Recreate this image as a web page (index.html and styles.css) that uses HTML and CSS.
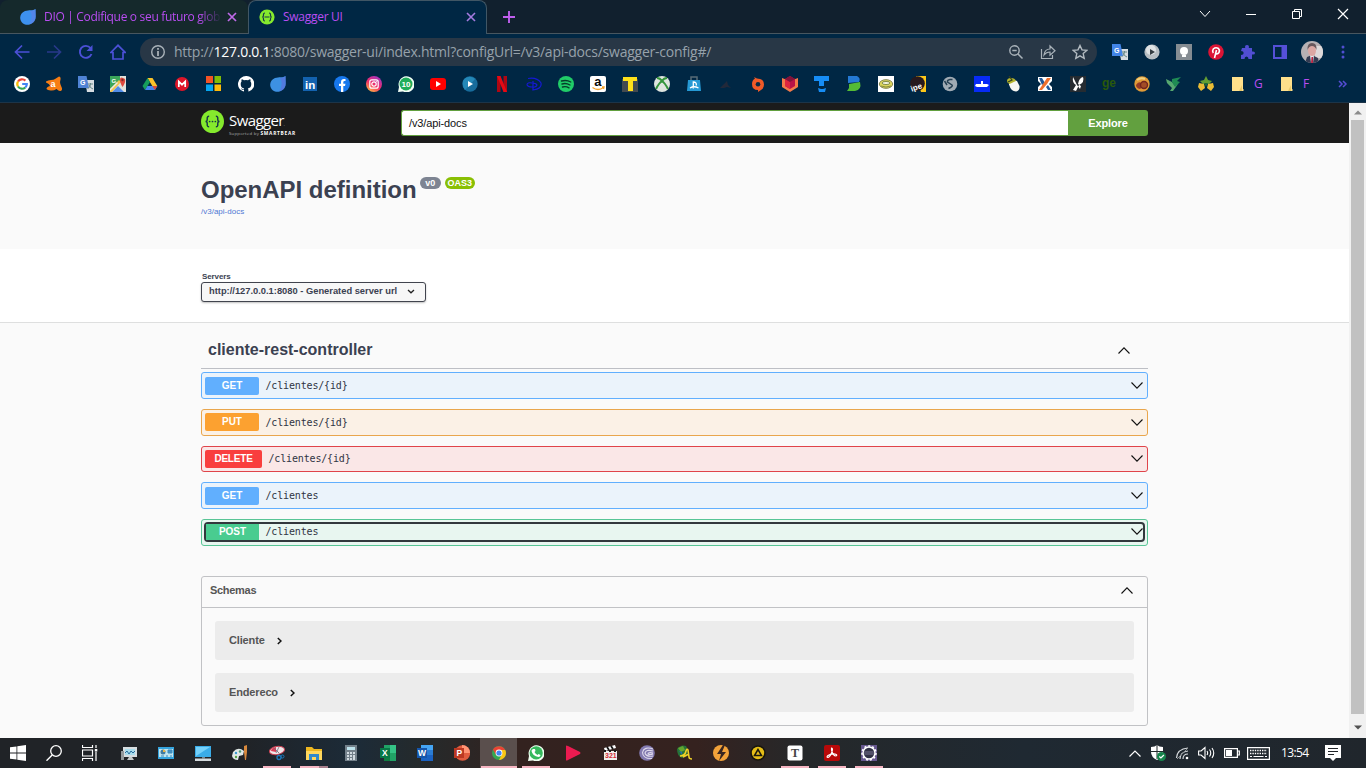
FILE: index.html
```html
<!DOCTYPE html>
<html lang="pt-BR">
<head>
<meta charset="utf-8">
<title>Swagger UI</title>
<link rel="stylesheet" href="styles.css">
</head>
<body>
<header class="tabs">
  <div class="tab tab-idle">
    <svg class="i16" viewBox="0 0 16 16"><path d="M15.500 0C13 2 9 .8 5 2-.5 4-1.500 11 3 14.500 8 18 16 14 15.700 7Z" fill="#3d91ef"/><path d="M15.500 0Q14 2 10 2q4 6-1 13.300Q16 14 15.700 7Z" fill="#5d82e8" opacity=".7"/></svg>
    <span class="tab-name fade">DIO | Codifique o seu futuro glob</span>
    <svg class="i10 close1" viewBox="0 0 10 10"><path d="M1 1l8 8M9 1l-8 8" stroke="#c06ae8" stroke-width="1.700"/></svg>
  </div>
  <div class="tab tab-active">
    <svg class="i16" viewBox="0 0 16 16"><circle cx="8" cy="8" r="7.600" fill="#85ea2d"/><path d="M6 4Q4.300 4 4.500 6q0 2-1.200 2 1.200 0 1.200 2-.2 2 1.500 2M10 4q1.700 0 1.500 2 0 2 1.200 2-1.200 0-1.200 2 .2 2-1.500 2M5.500 8h5" fill="none" stroke="#173647" stroke-width="1.200"/></svg>
    <span class="tab-name">Swagger UI</span>
    <svg class="i10" viewBox="0 0 10 10"><path d="M1 1l8 8M9 1l-8 8" stroke="#a67be0" stroke-width="1.600"/></svg>
  </div>
  <div class="plus"><svg width="12" height="12" viewBox="0 0 12 12"><path d="M6 0v12M0 6h12" stroke="#c05fee" stroke-width="1.900"/></svg></div>
  <div class="win-controls">
    <svg width="12" height="12" viewBox="0 0 12 12"><path d="M1 3l5 5.500L11 3" fill="none" stroke="#fff"/></svg>
    <svg width="12" height="12" viewBox="0 0 12 12"><path d="M1 6.500h10" stroke="#fff"/></svg>
    <svg width="12" height="12" viewBox="0 0 12 12"><path d="M1.500 3.500h7v7h-7zM3.500 3V1.500h7v7H9" fill="none" stroke="#fff"/></svg>
    <svg width="12" height="12" viewBox="0 0 12 12"><path d="M1 1l10 10M11 1L1 11" stroke="#fff" stroke-width="1.200"/></svg>
  </div>
</header>

<nav class="toolbar">
  <div class="nav-icons">
    <svg class="i16" viewBox="0 0 16 16"><path d="M15.500 8H2M8 1.500L1.500 8 8 14.500" fill="none" stroke="#4b50d6" stroke-width="1.700"/></svg>
    <svg class="i16" viewBox="0 0 16 16"><path d="M1 8h13M8 1.500L14.500 8 8 14.500" fill="none" stroke="#28398a" stroke-width="1.700"/></svg>
    <svg class="i16" viewBox="0 0 16 16"><path d="M13.500 10A6 6 0 1 1 12.500 4" fill="none" stroke="#4b50d6" stroke-width="1.900"/><path d="M14.500 1v6h-6z" fill="#4b50d6"/></svg>
    <svg class="i16" viewBox="0 0 16 16"><path d="M.8 8.500L8 1.300l7.200 7.200H13V15H3V8.500z" fill="none" stroke="#4b50d6" stroke-width="1.700"/></svg>
  </div>
  <div class="address">
    <svg class="i16" viewBox="0 0 16 16"><circle cx="8" cy="8" r="6.300" fill="none" stroke="#a9b2b9" stroke-width="1.400"/><path d="M8 4v1.700M8 7v5" stroke="#b9c0c5" stroke-width="1.600"/></svg>
    <span class="url">http://<b>127.0.0.1</b>:8080/swagger-ui/index.html?configUrl=/v3/api-docs/swagger-config#/</span>
    <div class="addr-icons">
      <svg class="i16" viewBox="0 0 16 16"><circle cx="6.500" cy="6.500" r="4.700" fill="none" stroke="#a9b2b9" stroke-width="1.400"/><path d="M10 10l4.500 4.500M4.300 6.500h4.400" stroke="#a9b2b9" stroke-width="1.500"/></svg>
      <svg class="i16" viewBox="0 0 16 16"><path d="M1.500 5v9.500h11V11M4 11c.5-4 3-6 6-6V2l5 4.700-5 4.500V8C7.500 8 5.500 9 4 11z" fill="none" stroke="#a9b2b9" stroke-width="1.200"/></svg>
      <svg class="i16" viewBox="0 0 16 16"><path d="M8 1.500l2 4.400 4.800.5-3.600 3.200 1 4.700L8 11.900l-4.200 2.400 1-4.700L1.200 6.400 6 5.900z" fill="none" stroke="#b3bbc1" stroke-width="1.400"/></svg>
    </div>
  </div>
  <div class="ext-icons">
    <svg class="i16" viewBox="0 0 16 16"><path d="M7 5h9v11H9z" fill="#d6dce1"/><path d="M0 0h8.500L11 12H0z" fill="#4285e8"/><text class="tiny" x="2" y="9" font-size="7" fill="#fff">G</text><path d="M10 8h5M12.500 7v1q0 3-3 5M11 9q1 3 4 4" stroke="#688" fill="none"/></svg>
    <svg class="i16" viewBox="0 0 16 16"><circle cx="8" cy="8" r="7.600" fill="#b7bec3"/><circle cx="7" cy="6" r="5" fill="#dfe3e5"/><path d="M6 5l5 3-5 3z" fill="#343c42"/></svg>
    <svg class="i16" viewBox="0 0 16 16"><path d="M0 0h16v16H0z" fill="#858c92"/><circle cx="8" cy="7" r="4" fill="#fff"/><path d="M6 11h4v2H6z" fill="#fff"/></svg>
    <svg class="i16" viewBox="0 0 16 16"><circle cx="8" cy="8" r="7.800" fill="#dc1435"/><path d="M5.300 9Q4 7 5.300 5 7.500 3 10 4.200 12.200 6 11 8.500 9.500 10.700 7.600 9.500M8.500 6L6.500 14" fill="none" stroke="#fff" stroke-width="1.600"/></svg>
    <svg class="i16" viewBox="0 0 16 16"><path d="M2 4h3.200Q4.500 1 7 1t1.800 3H12v3.500q3-.5 3 1.500t-3 1.500V15H8.500q0-2.500-2-2.500t-2 2.500H1v-4q2.700 0 2.700-2T1 7z" fill="#514ed3"/></svg>
    <svg class="i16" viewBox="0 0 16 16"><path d="M2 2h12v12H2z" fill="none" stroke="#5550d8" stroke-width="2"/><path d="M9.500 2H14v12H9.500z" fill="#5550d8"/></svg>
    <svg class="avatar" viewBox="0 0 22 22"><defs><clipPath id="av"><circle cx="11" cy="11" r="11"/></clipPath></defs><g clip-path="url(#av)"><path d="M0 0h22v22H0z" fill="#b7b1b4"/><path d="M13 5h9v12h-8z" fill="#ddd9da"/><path d="M4 22l2-6 5-2 6 3 1 5" fill="#343c53"/><path d="M9 14h4l-1 8h-2z" fill="#e8e9ed"/><path d="M10.500 16h1.500v6h-2z" fill="#b42342"/><ellipse cx="11" cy="9.500" rx="4" ry="5.500" fill="#dba7a3"/><path d="M6.500 9Q6 2 11 2t4.500 7Q14 5 11 5T6.500 9" fill="#68575b"/></g></svg>
    <svg class="menu" viewBox="0 0 4 16"><circle cx="2" cy="3" r="1.500" fill="#504fd2"/><circle cx="2" cy="8" r="1.500" fill="#504fd2"/><circle cx="2" cy="13" r="1.500" fill="#504fd2"/></svg>
  </div>
</nav>

<nav class="bookmarks">
  <svg viewBox="0 0 16 16"><circle cx="8" cy="8" r="8" fill="#fff"/><g fill="none" stroke-width="2.200"><path d="M11.400 4.600A4.800 4.800 0 0 0 4 5.500" stroke="#ea4335"/><path d="M4 5.500a4.800 4.800 0 0 0 0 5" stroke="#fbbc05"/><path d="M4 10.500a4.800 4.800 0 0 0 7.300 1" stroke="#34a853"/><path d="M11.300 11.500A4.700 4.700 0 0 0 12.800 8H8.200" stroke="#4285f4"/></g></svg>
  <svg viewBox="0 0 16 16"><path d="M13 .5q2 0 1.500 3L14 6q0 2 1.500 5t-1 4q-1.500.5-4-2-3 2-6 1.500T.5 13q0-2 3.500-3-.5-2-3-3T0 5.500Q2 4 5 4q3 0 4-1z" fill="#f77d13"/><text class="tiny" x="4.500" y="11" font-size="9" fill="#fff">a</text></svg>
  <svg viewBox="0 0 16 16"><path d="M7 4h9v12H9z" fill="#d6dce1"/><path d="M0 0h8.500L11 12H0z" fill="#4f83d5"/><text class="tiny" x="2" y="9" font-size="7" fill="#fff">G</text><path d="M10 8h5M12.500 7v1q0 3-3 5M11 9q1 3 4 4" stroke="#688" fill="none"/></svg>
  <svg viewBox="0 0 16 16"><path d="M0 0h16v16H0z" fill="#e1e2dc"/><path d="M0 0h10v5L2 13H0z" fill="#3ca65a"/><path d="M2 16l6-6 6 6z" fill="#528de9"/><path d="M0 13L9 4l2 2L2 16H0z" fill="#f2c34e"/><path d="M0 13l7-7 1 1-8 8z" fill="#e9ece7"/><text class="tiny" x="1.500" y="6.500" font-size="6" fill="#fff">G</text><path d="M12.500 11Q9.500 6 10 3t5 0q1 3-2.500 8" fill="#df493e"/><circle cx="12.500" cy="4" r="1.200" fill="#812b28"/></svg>
  <svg viewBox="0 0 16 16"><path d="M5.500 2h5l4.800 8h-5z" fill="#fbc229"/><path d="M5.500 2L8 6l-5 8-2.500-4z" fill="#169d5b"/><path d="M3 14l2.400-4h9.900L13 14z" fill="#4385ee"/><path d="M10.300 10h5L13 14z" fill="#dd4a37"/></svg>
  <svg viewBox="0 0 16 16"><circle cx="8" cy="8" r="7" fill="#dd1529"/><path d="M4.800 11V5.500L8 8.700l3.200-3.200V11" fill="none" stroke="#fff" stroke-width="1.700"/></svg>
  <svg viewBox="0 0 16 16"><path d="M0 0h7v7H0z" fill="#f35325"/><path d="M8.500 0H15v7H8.500z" fill="#81bc06"/><path d="M0 8.500h7V15H0z" fill="#05a6f0"/><path d="M8.500 8.500H15V15H8.500z" fill="#ffba08"/></svg>
  <svg viewBox="0 0 16 16"><path d="M8 0a8 8 0 0 0-2.500 15.600c.4 0 .5-.2.500-.5v-1.400c-2.200.4-2.800-1-3-1.500.8 0 1.200 1 2 1 .5 0 .9-.2 1.200-.8C4 12 2.700 11 2.700 8q0-1.400.9-2.400-.4-1 .1-2.300 1 0 2.300.9 2-.5 4 0 1.300-.9 2.300-.9.500 1.300.1 2.300.9 1 .9 2.400c0 3-1.500 4-3.500 4.400.4.400.6 1 .6 1.700v1c0 .4.100.5.400.5A8 8 0 0 0 8 0" fill="#fff"/></svg>
  <svg viewBox="0 0 16 16"><path d="M15.500 0C13 2 9 .8 5 2-.5 4-1.500 11 3 14.500 8 18 16 14 15.700 7Z" fill="#3d91e3"/><path d="M15.500 0Q14 2 10 2q4 6-1 13.300Q16 14 15.700 7Z" fill="#5c70dc" opacity=".7"/></svg>
  <svg viewBox="0 0 16 16"><path d="M1 1h14v14H1z" fill="#1362af"/><text class="tiny" x="3" y="12.500" font-size="11.500" fill="#fff">in</text></svg>
  <svg viewBox="0 0 16 16"><circle cx="8" cy="8" r="8" fill="#1778ed"/><path d="M7 16v-6H5V7.700h2V6q0-3 3-3h1.500v2h-1Q9.300 5 9.300 6.300v1.400h2.200L11 10H9.300v6z" fill="#fff"/></svg>
  <svg viewBox="0 0 16 16"><defs><linearGradient id="ig" x1=".2" y1="1" x2=".8" y2="0"><stop stop-color="#ffc142"/><stop offset=".45" stop-color="#f42e66"/><stop offset="1" stop-color="#9d35c8"/></linearGradient></defs><circle cx="8" cy="8" r="8" fill="url(#ig)"/><rect x="3.800" y="3.800" width="8.400" height="8.400" rx="2" fill="none" stroke="#fff" stroke-width="1.200"/><circle cx="8" cy="8" r="2.200" fill="none" stroke="#fff" stroke-width="1.200"/><circle cx="10.700" cy="5.300" r=".6" fill="#fff"/></svg>
  <svg viewBox="0 0 16 16"><path d="M0 16L1 11A8 8 0 1 1 5 15.500z" fill="#f2fff6"/><circle cx="8" cy="8" r="6.500" fill="#20ad59"/><text class="tiny" x="3.500" y="11" font-size="8" fill="#fff">10</text></svg>
  <svg viewBox="0 0 16 16"><rect y="2" width="16" height="12" rx="3" fill="#f00"/><path d="M6 5l5 3-5 3z" fill="#fff"/></svg>
  <svg viewBox="0 0 16 16"><circle cx="8" cy="8" r="7.700" fill="#176c9c"/><path d="M1 5a7.500 7.500 0 0 1 12-2q-4 5-10 11Q0 10 1 5" fill="#2488b8"/><path d="M6 5l5 3-5 3z" fill="#fff"/></svg>
  <svg viewBox="0 0 16 16"><path d="M3 0h3.500v16H3zM9.500 0H13v16H9.500z" fill="#ae0713"/><path d="M3 0h3.500L13 16H9.500z" fill="#e50914"/></svg>
  <svg viewBox="0 0 16 16"><path d="M2 2.500Q11 1 15 7q1 6-8 7V5M1 9q0-3 5-2 4 0 5 2-1 3-5 2-4 0-5-2" fill="none" stroke="#1519d4" stroke-width="1.200"/></svg>
  <svg viewBox="0 0 16 16"><circle cx="8" cy="8" r="8" fill="#20cc68"/><path d="M3.500 5q5-1.500 9.300 1M4 8q4-1.200 8 1M4.500 11q3.500-1 6.500.8" fill="none" stroke="#063c2a" stroke-width="1.400" stroke-linecap="round"/></svg>
  <svg viewBox="0 0 16 16"><rect width="16" height="16" rx="2" fill="#fff"/><text class="tiny" x="4.300" y="10" font-size="13" fill="#080808">a</text><path d="M2.500 11.500q5.500 4 11 0m-1.500-.5h2l-.5 2" fill="none" stroke="#f5a229" stroke-width="1.300"/></svg>
  <svg viewBox="0 0 16 16"><path d="M0 3h16v13H0z" fill="#434a50"/><path d="M1 1h14v4h-4v10H6V5H1z" fill="#ffe11a"/></svg>
  <svg viewBox="0 0 16 16"><circle cx="8" cy="8" r="8" fill="#dfe5df"/><path d="M3 2q3 0 5 3 2-3 5-3M2 13Q5 7 8 5q3 2 6 8" fill="none" stroke="#35953c" stroke-width="2"/></svg>
  <svg viewBox="0 0 16 16"><path d="M5 4V1h6v3" fill="none" stroke="#586c77" stroke-width="1.500"/><path d="M2 4h12l1 11H1z" fill="#2599d4"/><path d="M7.300 12.500V6q3.500 0 3 3.500M4 12q4-2.500 8.500 0" stroke="#fff" fill="none" stroke-width="1.300"/></svg>
  <svg viewBox="0 0 16 16"><path d="M2 12l4-4 3-3 1 4 3 3-4-1-3 1z" fill="#22293a"/></svg>
  <svg viewBox="0 0 16 16"><path d="M4 1l3 1.500q7 0 7 6 0 4-3 5.500L8 16v-2q-6 0-6-6 0-4 3-5.500z" fill="#f05a28"/><circle cx="8" cy="8.300" r="2.300" fill="#082b46"/></svg>
  <svg viewBox="0 0 16 16"><path d="M0 2l8 3 8-3v9l-8 5-8-5z" fill="#f47a49"/><path d="M3 3l5-3 5 3v7l-5 3-5-3z" fill="#b91247"/><path d="M3 3l5 3v7l-5-3z" fill="#df263f"/><path d="M3 3l5-3 5 3-5 3z" fill="#831339"/></svg>
  <svg viewBox="0 0 16 16"><path d="M0 0h15v5H10v5H5V5H0zM4 12l3 1h2l3-1-1 4H5z" fill="#168df5"/></svg>
  <svg viewBox="0 0 16 16"><path d="M2 0h9q4 2 2 6L2 7z" fill="#2479d4"/><path d="M3 8l11-2q2 8-5 9H1l2-3z" fill="#54bb35"/></svg>
  <svg viewBox="0 0 16 16"><path d="M0 0h16v16H0z" fill="#fff"/><ellipse cx="8" cy="8" rx="6.700" ry="4.300" fill="#ddd65d" stroke="#858552"/><ellipse cx="8" cy="7" rx="4" ry="1.500" fill="#f8f8e7" stroke="#66712c" stroke-width=".8"/><path d="M3 10q5 2 10 0" fill="none" stroke="#66712c" stroke-width=".7"/></svg>
  <svg viewBox="0 0 16 16"><path d="M6 0h10v16h-5z" fill="#fdc719"/><circle cx="7.500" cy="7.500" r="7.300" fill="#27191d"/><text class="tiny" x="0" y="14" font-size="8" transform="rotate(-20 6 10)" fill="#fff">ipe</text></svg>
  <svg viewBox="0 0 16 16"><circle cx="8" cy="8" r="7.300" fill="#a0abb4"/><path d="M10.500 3.500H8Q5 4 5.500 6L10 9q1 1-1.500 2.500l-2 1M2.500 5l2.500 4" stroke="#253f51" stroke-width="1.500" fill="none"/></svg>
  <svg viewBox="0 0 16 16"><path d="M0 0h16v16H0z" fill="#072bf7"/><path d="M2 8h5V5h2v3h4l2 1-2 2H3L1 10z" fill="#fff"/></svg>
  <svg viewBox="0 0 16 16"><path d="M3 6q4-3 8-1l2.500 5q.5 5-3.500 5.500-5 0-7-7z" fill="#f7f7f2"/><path d="M1 5q0-3 4-3 4 0 5 3L3.500 8Q1 7 1 5" fill="#b5b52e"/><path d="M3 0l3 4-4 2" stroke="#34411d" stroke-width="1.200" fill="none"/></svg>
  <svg viewBox="0 0 16 16"><path d="M0 1h14v4l-3 3 3 3v4H0v-4l3-3-3-3z" fill="#fff"/><path d="M1 2h3l3 5-3 2zm9 7l3 5h-3L8 11z" fill="#235999"/><path d="M9 2h4l-4 6-5 6H1z" fill="#ef702c"/></svg>
  <svg viewBox="0 0 16 16"><path d="M0 0h16v16H0z" fill="#252b31"/><path d="M7 9L3 1q-1 6 3 8l-3 5 3 1 3-6q6-3 4-8-4 1-5 7l3 2-1 3" fill="#fff"/></svg>
  <svg viewBox="0 0 16 16"><text class="tiny" x="0" y="11" font-size="12" fill="#29590b">ge</text></svg>
  <svg viewBox="0 0 16 16"><circle cx="8" cy="8" r="7.700" fill="#e09a37"/><path d="M3 4q4-3 8-1" stroke="#f0d180" stroke-width="2" fill="none"/><path d="M2 9q3-5 6-1 1 3-2 5-4-1-4-4" fill="#963a27"/><circle cx="10" cy="9" r="3.500" fill="#a24c26" stroke="#74251d" stroke-width="1.400"/></svg>
  <svg viewBox="0 0 16 16"><path d="M0 3l6 3 3 4 3-2-5 7H4l2-3-5-5z" fill="#57a870"/><path d="M6 3l9-2-4 4 3 1-5 5-3-5z" fill="#1f8b54"/></svg>
  <svg viewBox="0 0 16 16"><path d="M8 0l2 4 4 1-3 3H5L2 5l4-1z" fill="#639e32"/><path d="M1 7l5 1 1 4-4 3-3-4zM15 7l-5 1-1 4 4 3 3-4z" fill="#eabd35"/><path d="M6 7h4L8 11z" fill="#1b6838"/></svg>
  <div class="folder folder-g"><svg viewBox="0 0 16 16"><path d="M2 1h11v12l1 1-1 1H2z" fill="#ffe08b"/><path d="M12 9v6H9z" fill="#e9c767"/></svg><span>G</span></div>
  <div class="folder folder-f"><svg viewBox="0 0 16 16"><path d="M2 1h11v12l1 1-1 1H2z" fill="#ffe08b"/><path d="M12 9v6H9z" fill="#e9c767"/></svg><span>F</span></div>
  <svg class="more" viewBox="0 0 10 10"><path d="M1 2l3 3-3 3M5 2l3 3-3 3" fill="none" stroke="#554dd4" stroke-width="1.500"/></svg>
</nav>

<div class="viewport">
<main class="page">
  <div class="topbar"><div class="wrap topbar-row">
    <div class="logo">
      <svg width="23" height="23" viewBox="0 0 24 24"><circle cx="12" cy="12" r="12" fill="#85ea2d"/><path d="M8.500 6.500q-2.300 0-2 2.500.2 3-1.800 3 2 0 1.800 3-.3 2.500 2 2.500M15.500 6.500q2.300 0 2 2.500-.2 3 1.800 3-2 0-1.800 3 .3 2.500-2 2.500" fill="none" stroke="#173647" stroke-width="1.500"/><g fill="#173647"><circle cx="9" cy="12" r=".9"/><circle cx="12" cy="12" r=".9"/><circle cx="15" cy="12" r=".9"/></g></svg>
      <div class="logo-text"><span class="logo-name">Swagger<i>.</i></span><span class="logo-sub">Supported by <b>SMARTBEAR</b></span></div>
    </div>
    <div class="search"><span class="search-input">/v3/api-docs</span><span class="explore">Explore</span></div>
  </div></div>

  <section class="info"><div class="wrap">
    <h1>OpenAPI definition<span class="pill pill-v">v0</span><span class="pill pill-oas">OAS3</span></h1>
    <a class="docs">/v3/api-docs</a>
  </div></section>

  <section class="servers"><div class="wrap">
    <div class="servers-label">Servers</div>
    <div class="select"><span>http://127.0.0.1:8080 - Generated server url</span><svg width="8" height="5" viewBox="0 0 8 5"><path d="M1 1l3 2.800L7 1" fill="none" stroke="#222" stroke-width="1.300"/></svg></div>
  </div></section>

  <section class="wrap">
    <div class="tag"><h2>cliente-rest-controller</h2><svg class="chev" viewBox="0 0 12 7"><path d="M.5 6.500L6 .8l5.500 5.700" fill="none" stroke="#111" stroke-width="1.100"/></svg></div>
    <div class="ops">
      <div class="op get"><div class="op-in"><b>GET</b><code>/clientes/{id}</code><svg class="chev" viewBox="0 0 12 7"><path d="M.5.500L6 6.200 11.500.5" fill="none" stroke="#111" stroke-width="1.100"/></svg></div></div>
      <div class="op put"><div class="op-in"><b>PUT</b><code>/clientes/{id}</code><svg class="chev" viewBox="0 0 12 7"><path d="M.5.500L6 6.200 11.500.5" fill="none" stroke="#111" stroke-width="1.100"/></svg></div></div>
      <div class="op delete"><div class="op-in"><b>DELETE</b><code>/clientes/{id}</code><svg class="chev" viewBox="0 0 12 7"><path d="M.5.500L6 6.200 11.500.5" fill="none" stroke="#111" stroke-width="1.100"/></svg></div></div>
      <div class="op get"><div class="op-in"><b>GET</b><code>/clientes</code><svg class="chev" viewBox="0 0 12 7"><path d="M.5.500L6 6.200 11.500.5" fill="none" stroke="#111" stroke-width="1.100"/></svg></div></div>
      <div class="op post focused"><div class="op-in"><b>POST</b><code>/clientes</code><svg class="chev" viewBox="0 0 12 7"><path d="M.5.500L6 6.200 11.500.5" fill="none" stroke="#111" stroke-width="1.100"/></svg></div></div>
    </div>
    <div class="schemas">
      <div class="schemas-head"><h3>Schemas</h3><svg class="chev" viewBox="0 0 12 7"><path d="M.5 6.500L6 .8l5.500 5.700" fill="none" stroke="#111" stroke-width="1.100"/></svg></div>
      <div class="models">
        <div class="model"><span>Cliente</span><svg width="5" height="8" viewBox="0 0 5 8"><path d="M.8 1L4 4 .8 7" fill="none" stroke="#111" stroke-width="1.500"/></svg></div>
        <div class="model"><span>Endereco</span><svg width="5" height="8" viewBox="0 0 5 8"><path d="M.8 1L4 4 .8 7" fill="none" stroke="#111" stroke-width="1.500"/></svg></div>
      </div>
    </div>
  </section>
</main>
<aside class="scrollbar"><svg width="8" height="5" viewBox="0 0 8 5"><path d="M0 4.500L4 .5l4 4z" fill="#8b8b8b"/></svg><div class="thumb"></div><svg width="8" height="5" viewBox="0 0 8 5"><path d="M0 .5l4 4 4-4z" fill="#505050"/></svg></aside>
</div>

<footer class="taskbar">
  <div class="sys"><svg viewBox="0 0 16 16"><path d="M0 2.300l6.500-.9v6.200H0zM7.300 1.300L16 0v7.600H7.300zM0 8.400h6.500v6.200L0 13.700zM7.300 8.400H16V16l-8.700-1.300z" fill="#fff"/></svg></div>
  <div class="sys"><svg viewBox="0 0 16 16"><circle cx="10" cy="6" r="5.300" fill="none" stroke="#fff" stroke-width="1.300"/><path d="M6.200 10L.5 15.700" stroke="#fff" stroke-width="1.400"/></svg></div>
  <div class="sys"><svg viewBox="0 0 16 16"><path d="M.5 0v2.500h10V0M.5 5h10v6H.500zM.5 16v-2.500h10V16M14 0v3m0 4v9" fill="none" stroke="#fff" stroke-width="1.200"/><path d="M12.800 4h2.500v2.500h-2.500z" fill="#fff"/></svg></div>
  <div class="app first"><svg viewBox="0 0 16 16"><path d="M2 2h14v10H2z" fill="#d7dde0"/><path d="M4 4h10v6H4z" fill="#a9dcec"/><path d="M4 8l2-2 2 3 2-3 2 2 2-2" stroke="#276c9d" fill="none"/><path d="M0 6h3v9H0z" fill="#92989b"/><path d="M8 12h3l2 3H6z" fill="#c3c9ca"/></svg></div>
  <div class="app"><svg viewBox="0 0 16 16"><path d="M0 2h16v12H0z" fill="#35a4de"/><path d="M1 4h14v8H1z" fill="#bfe4ef"/><circle cx="5" cy="7" r="2.500" fill="#417ba2"/><path d="M5 7V4.500A2.500 2.500 0 0 1 7.500 7" fill="#e7b445"/><path d="M10 5h4v3h-4zM3 11h3m2 0h2m2 0h2" fill="#468fc0" stroke="#398bbd"/></svg></div>
  <div class="app"><svg viewBox="0 0 16 16"><path d="M0 1h16v11H0z" fill="#3aace8"/><path d="M1 2h14L1 11z" fill="#75d1fa"/><path d="M7 12h3v1.500H7z" fill="#77868e"/><path d="M0 13.500h16V16H0z" fill="#d4dadd"/></svg></div>
  <div class="app"><svg viewBox="0 0 16 16"><path d="M1 7q5-6 11-1l-1 4-4 1-1 4q-5 0-6-4z" fill="#e0e8e6"/><circle cx="4" cy="8" r="1.200" fill="#3b9ad0"/><circle cx="8" cy="6.500" r="1.200" fill="#4c9a70"/><circle cx="4" cy="12" r="1.200" fill="#56a443"/><path d="M12 1l3-1v7h-3zM12 7h3l-1 8h-1z" fill="#d7893d"/></svg></div>
  <div class="app pinned"><svg viewBox="0 0 16 16"><ellipse cx="8" cy="5.500" rx="7.600" ry="4" fill="#f1e6e9" stroke="#ca4355" transform="rotate(-10 8 5.500)"/><path d="M2 6q0-3 5-4v5z" fill="#d83d56"/><path d="M5 3l5 5M10 2L7 8" stroke="#6f6f7b" stroke-width=".8"/><circle cx="10" cy="12.500" r="2" fill="none" stroke="#1c79bd" stroke-width="1.300"/><circle cx="13.500" cy="11.500" r="1.500" fill="none" stroke="#1c79bd"/></svg></div>
  <div class="app pinned split"><svg viewBox="0 0 16 16"><path d="M0 2h6l2 2h8v11H0z" fill="#eeb720"/><path d="M0 6h16v9H0z" fill="#ffd75d"/><path d="M3 15V9h10v6h-3v-3H6v3z" fill="#3189cb"/></svg></div>
  <div class="app"><svg viewBox="0 0 16 16"><path d="M2 0h12v16H2z" fill="#73808a"/><path d="M4 2h8v3H4z" fill="#bde3ed"/><path d="M4 7h2v2H4zm3 0h2v2H7zm3 0h2v2h-2zM4 10h2v2H4zm3 0h2v2H7zm3 0h2v5h-2zM4 13h2v2H4zm3 0h2v2H7z" fill="#d1dae0"/></svg></div>
  <div class="app"><svg viewBox="0 0 16 16"><path d="M4 0h12v16H4z" fill="#21a366"/><path d="M10 0h6v8h-6z" fill="#35c486"/><path d="M4 8h6v8H4z" fill="#107c41"/><path d="M0 3h10v10H0z" fill="#087846"/><text class="tiny" x="2" y="11" font-size="8.500" fill="#fff">X</text></svg></div>
  <div class="app"><svg viewBox="0 0 16 16"><path d="M4 0h12v16H4z" fill="#1b62c2"/><path d="M4 0h12v5H4z" fill="#44a5f4"/><path d="M4 5h12v5H4z" fill="#2b7cd3"/><path d="M0 3h10v10H0z" fill="#1556ab"/><text class="tiny" x="1" y="11" font-size="8.500" fill="#fff">W</text></svg></div>
  <div class="app"><svg viewBox="0 0 16 16"><circle cx="8.500" cy="8" r="7.700" fill="#e15c3e"/><path d="M8 0a8 8 0 0 1 8 8H8z" fill="#ff9474"/><path d="M0 3h10v10H0z" fill="#bc3822"/><text class="tiny" x="2.500" y="11" font-size="8.500" fill="#fff">P</text></svg></div>
  <div class="app pinned current"><svg viewBox="0 0 16 16"><circle cx="8" cy="8" r="7" fill="#35a853"/><path d="M2 4.500A7 7 0 0 1 14.200 5H8L5 10z" fill="#ea4335"/><path d="M8 5h6.300A7 7 0 0 1 8 15l3-6z" fill="#fbc514"/><circle cx="8" cy="8" r="3.400" fill="#fff"/><circle cx="8" cy="8" r="2.600" fill="#4285f4"/></svg></div>
  <div class="app pinned"><svg viewBox="0 0 16 16"><path d="M0 16L1 11A8 8 0 1 1 5 15.500z" fill="#effff1"/><circle cx="8.200" cy="7.900" r="6.600" fill="#35b95c"/><path d="M5 4l2 0 .5 2-1 1q1 2 3 3l1-1 2 1q0 2-2 2-6-1-7-6 0-1 1.500-2" fill="#fff"/></svg></div>
  <div class="app"><svg viewBox="0 0 16 16"><path d="M1 1q0-1 2 0l12 6q1 1 0 2L3 15q-2 1-2 0z" fill="#eb1b50"/></svg></div>
  <div class="app"><svg viewBox="0 0 16 16"><path d="M2 6h13v9H2z" fill="#f0f0ed"/><path d="M2 3l11-3 1 3L3 6z" fill="#fff"/><path d="M5 2l2 3M9 1l2 3M2 6l2 0M7 6h2m3 0h2" stroke="#171717" stroke-width="1.800"/><text class="tiny" x="3" y="13" font-size="7" fill="#d32c36">321</text></svg></div>
  <div class="app"><svg viewBox="0 0 16 16"><circle cx="8" cy="8" r="7.800" fill="#8279af"/><path d="M14 4Q5 1 3.500 7.500 4 14 13 13.500M14 6Q7 4 6 8q1 4 8 3M14 8q-5-1-5 1 2 1 5 0" fill="none" stroke="#ded9ec" stroke-width="1.100"/></svg></div>
  <div class="app"><svg viewBox="0 0 16 16"><path d="M1 4q4-5 9-3l2 4-1 6-5 2q-5-2-5-9" fill="#267338"/><path d="M2 3l5-2 2 4-4 2z" fill="#64a72f"/><path d="M3 6l3 1v3z" fill="#246bab"/><path d="M4 11q5 0 6-5 1-3 2-1l1 7q0 2 3 2M7 12l6-3" stroke="#efd127" stroke-width="1.600" fill="none"/></svg></div>
  <div class="app"><svg viewBox="0 0 16 16"><circle cx="8" cy="8" r="8" fill="#f2a23a"/><path d="M10 0L4 9h4l-2 7 7-9H9l3-7z" fill="#382521"/></svg></div>
  <div class="app"><svg viewBox="0 0 16 16"><circle cx="8" cy="8" r="7.700" fill="#17150d"/><circle cx="8" cy="8" r="6.200" fill="#e5bd17"/><path d="M8 4.500l-3.500 6h7z" fill="none" stroke="#1b190d" stroke-width="1.500"/></svg></div>
  <div class="app pinned"><svg viewBox="0 0 16 16"><rect x=".5" y=".5" width="15" height="15" rx="2" fill="#fff"/><text class="serif" x="4" y="12" font-size="12" fill="#444">T</text></svg></div>
  <div class="app pinned"><svg viewBox="0 0 16 16"><rect width="16" height="16" rx="2" fill="#b80909"/><path d="M7.500 3q2 0 0 5-1.500 4-3.500 4.500-2 0 0-2 3-2 7-1.500 3 1 1 2Q9 11 7.500 5z" fill="none" stroke="#fff" stroke-width="1.100"/></svg></div>
  <div class="app pinned"><svg viewBox="0 0 16 16"><path d="M0 0h16v16H0z" fill="#66578e"/><circle cx="8" cy="8" r="6" fill="#303044" stroke="#fff" stroke-width="1.500"/><circle cx="8" cy="8" r="7" fill="none" stroke="#fff" stroke-width="1.500" stroke-dasharray="2 2"/><path d="M3 7h10M3 9h10" stroke="#77728e"/></svg></div>
  <div class="tray">
    <svg width="12" height="7" viewBox="0 0 12 7"><path d="M.5 6.500L6 1l5.500 5.500" fill="none" stroke="#fff" stroke-width="1.200"/></svg>
    <svg width="16" height="16" viewBox="0 0 16 16"><path d="M1 2q4 0 6-2 2 2 6 2v5q0 5-6 8-6-3-6-8z" fill="#fff"/><path d="M7 0v14M1 6.500h12" stroke="#222b2c"/><circle cx="11.500" cy="11.500" r="4.500" fill="#16844c"/><path d="M9.300 11.500l1.600 1.500 3-3" fill="none" stroke="#fff" stroke-width="1.200"/></svg>
    <svg width="14" height="14" viewBox="0 0 14 14"><path d="M1.500 12Q2 3 13 2M5 13q0-7 8-8M8 13q0-5 5-5" fill="none" stroke="#d6dadd" stroke-width="1.200"/><path d="M2 13L13 2" stroke="#8b9094"/><circle cx="12" cy="12" r="1.300" fill="#fff"/></svg>
    <svg width="17" height="14" viewBox="0 0 17 14"><path d="M.6 5h2.500L7 1.500v11L3.100 9H.6zM9 5q1.300 2 0 4M11.500 3.500q2.500 3.500 0 7M14 2q3.500 5 0 10" fill="none" stroke="#fff" stroke-width="1.100"/></svg>
    <svg width="16" height="10" viewBox="0 0 16 10"><path d="M.6.600h12.800v8.800H.6zM14 3h1.300v4H14" fill="none" stroke="#fff" stroke-width="1.200"/><path d="M2 2h6v6H2z" fill="#fff"/></svg>
    <svg class="keyboard" width="23" height="13" viewBox="0 0 23 13"><path d="M.6.600h21.800v11.800H.6z" fill="none" stroke="#fff" stroke-width="1.200"/><path d="M3 3.500h17M3 6.500h17" stroke="#fff" stroke-width="1.300" stroke-dasharray="1.400 1"/><path d="M3 9.500h2m1.500 0h10m1.500 0h2" stroke="#fff" stroke-width="1.200"/></svg>
    <span class="clock">13:54</span>
    <svg width="16" height="16" viewBox="0 0 16 16"><path d="M0 0h16v13h-5l-3 3-3-3H0z" fill="#fff"/><path d="M3 3.500h10M3 6.500h10M3 9.500h6" stroke="#202428" stroke-width="1.200"/></svg>
  </div>
</footer>
</body>
</html>
```
FILE: styles.css
```css
* { box-sizing: border-box; }
body { margin: 0; width: 1366px; height: 768px; overflow: hidden; display: flex; flex-direction: column; font-family: "Liberation Sans", Arial, sans-serif; background: #fafafa; color: #3b4151; }
svg { display: block; flex: none; }
.i16 { width: 16px; height: 16px; }
.i10 { width: 10px; height: 10px; }
.tiny { font-family: "Liberation Sans", sans-serif; font-weight: bold; }
.serif { font-family: "Liberation Serif", serif; font-weight: bold; }

/* Browser chrome */
.tabs { height: 34px; flex: none; display: flex; background: linear-gradient(#11202e 33px, #48565f 33px); font: 12px/16px "Open Sans", sans-serif; color: #b94df2; }
.tab { height: 34px; display: flex; align-items: center; }
.tab-idle { width: 248px; height: 33px; padding: 1px 11px 0 20px; background: #15292c; border-radius: 8px 8px 0 0; }
.tab-active { width: 239px; padding: 0 10px 1px 10px; background: #002744; border: 1px solid #405665; border-bottom: 0; border-radius: 8px 8px 0 0; }
.tab-name { flex: 1; margin-left: 8px; white-space: nowrap; letter-spacing: -.28px; }
.fade { flex: none; width: 176px; letter-spacing: -.32px; -webkit-mask-image: linear-gradient(90deg, #000 155px, transparent 178px); mask-image: linear-gradient(90deg, #000 155px, transparent 178px); }
.close1 { margin-left: 7px; }
.plus { width: 44px; height: 33px; display: flex; align-items: center; justify-content: center; }
.win-controls { margin-left: auto; display: flex; gap: 34px; padding: 8px 17px 0 0; }
.toolbar { height: 36px; flex: none; background: #002744; display: flex; align-items: center; }
.nav-icons { display: flex; gap: 16px; padding-left: 14px; width: 140px; }
.address { width: 957px; height: 28px; border-radius: 14px; background: #283746; display: flex; align-items: center; padding: 0 9px 0 10px; }
.url { margin-left: 8px; font: 14px/20px "Open Sans", sans-serif; letter-spacing: -.24px; color: #97a2ab; white-space: nowrap; }
.url b { font-weight: 400; color: #fff; }
.addr-icons { margin-left: auto; display: flex; gap: 16px; }
.ext-icons { display: flex; align-items: center; gap: 16px; margin-left: 15px; }
.avatar { width: 22px; height: 22px; margin-left: -3px; }
.menu { width: 4px; height: 16px; margin-left: 2px; }
.bookmarks { height: 33px; flex: none; background: #002744; border-bottom: 1px solid #1c3448; display: flex; align-items: center; padding: 0 18px 4px 14px; gap: 16px; }
.bookmarks svg { width: 16px; height: 16px; }
.folder { display: flex; align-items: center; gap: 8px; width: 33px; font: 12px/16px "Open Sans", sans-serif; color: #b94df2; }
.bookmarks .more { width: 10px; height: 14px; margin-left: auto; }

/* Swagger page */
.viewport { height: 635px; flex: none; display: flex; }
.page { width: 1349px; }
.wrap { width: 947px; margin-left: 201px; }
.topbar { height: 40px; background: #1b1b1b; }
.topbar-row { height: 40px; display: flex; align-items: center; }
.logo { width: 200px; display: flex; align-items: flex-start; gap: 5px; height: 26px; }
.logo-text { display: flex; flex-direction: column; color: #fff; }
.logo-name { font: 15px/21px "Open Sans", sans-serif; letter-spacing: -.6px; height: 21px; }
.logo-name i { font-size: 6px; color: #888; }
.logo-sub { font: 4.300px/5px "Open Sans", sans-serif; letter-spacing: .25px; color: #aaa; white-space: nowrap; }
.logo-sub b { color: #fff; font-size: 4.800px; letter-spacing: .75px; }
.search { width: 747px; height: 26px; display: flex; }
.search-input { width: 667px; background: #fff; border: 1px solid #62a03f; border-width: 1px 0 1px 1px; border-radius: 3px 0 0 3px; padding: 0 7px; font-size: 11px; letter-spacing: -.12px; line-height: 24px; color: #111; }
.explore { width: 80px; background: #62a03f; border-radius: 0 3px 3px 0; color: #fff; font-size: 11px; letter-spacing: -.1px; font-weight: bold; line-height: 26px; text-align: center; }
.info { height: 106px; padding-top: 33px; }
h1 { margin: 0; font-size: 24px; line-height: 28px; height: 28px; display: flex; align-items: flex-start; white-space: nowrap; letter-spacing: -.02px; }
.pill { margin-top: 1px; height: 12px; line-height: 12px; border-radius: 6px; color: #fff; text-align: center; font-size: 9px; letter-spacing: 0; }
.pill-v { width: 21px; margin-left: 3px; background: #7d8492; }
.pill-oas { width: 30px; margin-left: 4px; background: #89bf04; }
.docs { display: block; margin-top: 3px; font-size: 8px; line-height: 9px; color: #4f78d4; }
.servers { height: 74px; background: #fff; border-bottom: 1px solid #dedfdf; padding-top: 23px; }
.servers-label { font-size: 8px; font-weight: bold; letter-spacing: -.1px; line-height: 10px; padding-left: 1px; }
.select { width: 225px; height: 20px; border: 1px solid #41444e; border-radius: 3px; box-shadow: 0 1px 2px rgba(0,0,0,.25); background: #f7f7f7; font-size: 9.330px; font-weight: bold; line-height: 17px; padding: 0 10px 1px 7px; display: flex; align-items: center; justify-content: space-between; white-space: nowrap; }
.tag { height: 46px; border-bottom: 1px solid #bdbfc5; display: flex; align-items: center; justify-content: space-between; padding: 9px 18px 0 7px; }
h2 { margin: 0; font-size: 16px; line-height: 20px; }
.chev { width: 12px; height: 7px; }
.ops { padding-top: 3.300px; display: grid; gap: 10px; }
.op { height: 26.670px; border: 1px solid; border-radius: 3px; padding: 3px; }
.op-in { height: 18.670px; display: flex; align-items: center; padding-right: 1px; }
.op b { min-width: 54px; height: 18px; line-height: 17px; padding: 0 9px; border-radius: 2px; color: #fff; font-size: 10px; letter-spacing: -.05px; text-align: center; }
.op code { margin-left: 6.500px; font: 10px/16px "DejaVu Sans Mono", monospace; letter-spacing: -.16px; color: #303544; }
.op .chev { margin-left: auto; }
.put code, .post code { padding-top: 1px; }
.get { border-color: #61affe; background: #ebf3fb; } .get b { background: #61affe; }
.put { border-color: #e9a64d; background: #fbf1e6; } .put b { background: #fca130; }
.delete { border-color: #e0444a; background: #fae7e7; } .delete b { width: 57px; padding: 0; letter-spacing: -.2px; background: #f93e3e; }
.post { border-color: #59c596; background: #e8f6f0; } .post b { background: #49cc90; }
.focused { padding: 2px; } .focused .op-in { height: 20px; border: 2px solid #32383d; border-radius: 4px; padding-right: 0; } .focused b { height: 16px; line-height: 16px; min-width: 53px; border-radius: 0; }
.schemas { margin-top: 30px; height: 150px; border: 1px solid #c1c2c5; border-radius: 3px; }
.schemas-head { height: 31px; border-bottom: 1px solid #c1c2c5; display: flex; align-items: center; justify-content: space-between; padding: 0 14px 3px 8px; }
h3 { margin: 0; font-size: 11px; color: #555; letter-spacing: -.3px; }
.models { padding: 13px; display: grid; gap: 13px; }
.model { height: 39px; background: #ececec; border-radius: 3px; display: flex; align-items: center; gap: 12px; padding-left: 14px; font-size: 11px; letter-spacing: -.15px; font-weight: bold; color: #555; }
.model svg { margin-top: 2px; }
.scrollbar { width: 17px; background: #f1f1f1; display: flex; flex-direction: column; align-items: center; padding: 7px 0; }
.thumb { width: 13px; height: 594px; margin: 5px 0 11px; background: #c1c1c1; }

/* Windows taskbar */
.taskbar { height: 30px; flex: none; display: flex; background: linear-gradient(90deg, #202327 0, #202327 18%, #1c2b38 26%, #252a2b 31%, #33221f 38%, #35221f 51%, #25282a 59%, #1f2932 75%, #20262c 100%); }
.sys { width: 36px; height: 30px; display: flex; align-items: center; justify-content: center; }
.sys svg, .app svg { width: 16px; height: 16px; }
.app { width: 37px; height: 30px; display: flex; flex-direction: column; align-items: center; padding-top: 7px; }
.first { margin-left: 2px; }
.pinned::after { content: ""; width: 28px; height: 2px; margin-top: 5px; background: #f6b5c2; }
.split::after { background: linear-gradient(90deg, #f6b5c2 19px, #a87f8c 19px); }
.current { background: #5a4f4d; } .current::after { width: 36px; }
.tray { margin-left: auto; display: flex; align-items: center; padding-right: 25px; gap: 9px; }
.keyboard { margin-left: -2px; }
.clock { font: 12px/18px "Open Sans", sans-serif; color: #fff; letter-spacing: -.6px; width: 26px; margin: 0 9px 0 2px; white-space: nowrap; }
```
